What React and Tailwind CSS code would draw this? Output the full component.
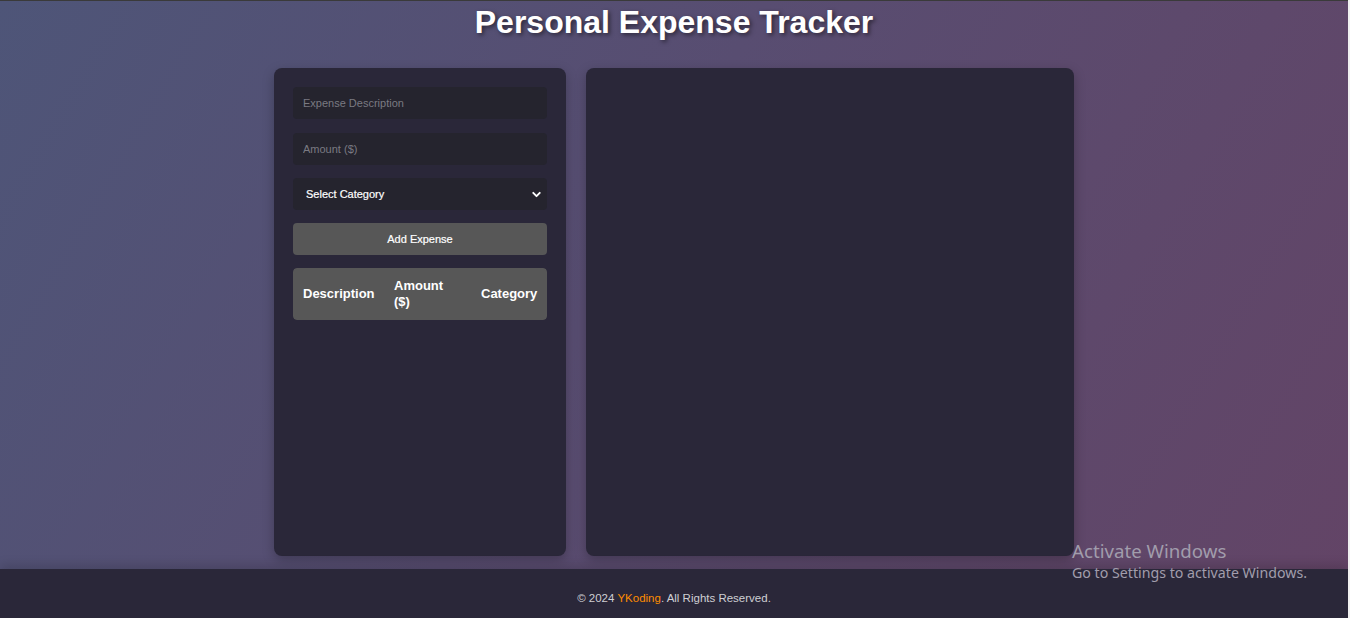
import { ChevronDown } from 'lucide-react';

export default function App() {
  return (
    <div className="relative flex h-[618px] w-[1350px] overflow-hidden font-['Liberation_Sans',Arial,sans-serif]">
      <div className="flex h-full w-[1348px] flex-col border-t border-[#3a3a3a] bg-[linear-gradient(120deg,#4e5578_0%,#584d71_45%,#634466_100%)]">
        {/* Title */}
        <h1 className="pt-[3px] text-center text-[32px] leading-[37px] font-bold text-white [text-shadow:2px_2px_4px_rgba(0,0,0,0.5)]">
          Personal Expense Tracker
        </h1>

        {/* Cards */}
        <main className="flex flex-1 justify-center gap-5 pt-[27px]">
          <section className="flex h-[488px] w-[292px] flex-col gap-[13px] rounded-lg bg-[#2a2739] p-[19px] shadow-[0_4px_12px_rgba(0,0,0,0.25)]">
            <input
              type="text"
              placeholder="Expense Description"
              className="mb-px h-8 w-full rounded bg-[#25242e] px-[10px] text-[11px] text-white outline-none placeholder:text-[#7a7a82]"
            />
            <input
              type="text"
              placeholder="Amount ($)"
              className="h-8 w-full rounded bg-[#25242e] px-[10px] text-[11px] text-white outline-none placeholder:text-[#7a7a82]"
            />
            <div className="relative">
              <select className="h-8 w-full appearance-none rounded bg-[#25242e] px-[13px] text-[11px] text-white outline-none [-webkit-text-stroke:0.2px_white]">
                <option>Select Category</option>
              </select>
              <ChevronDown size={13} strokeWidth={3.5} className="pointer-events-none absolute top-[10px] right-[4px] text-white" />
            </div>
            <button className="h-8 w-full rounded bg-[#575757] text-[11px] text-white [-webkit-text-stroke:0.2px_white]">
              Add Expense
            </button>
            <table className="w-full table-fixed overflow-hidden rounded">
              <thead>
                <tr className="bg-[#575757] text-white">
                  <th className="w-[91px] rounded-l px-[10px] py-[10px] text-left text-[13px] leading-[16px] font-bold">Description</th>
                  <th className="w-[87px] px-[10px] py-[10px] text-left text-[13px] leading-[16px] font-bold">Amount ($)</th>
                  <th className="w-[76px] rounded-r px-[10px] py-[10px] text-left text-[13px] leading-[16px] font-bold">Category</th>
                </tr>
              </thead>
            </table>
          </section>

          <section className="h-[488px] w-[488px] rounded-lg bg-[#2a2739] shadow-[0_4px_12px_rgba(0,0,0,0.25)]"></section>
        </main>

        {/* Footer */}
        <footer className="flex h-[49px] items-center justify-center bg-[#2a2739] pt-[11px] text-[11.5px] text-[#cfcfd4] shadow-[0_-4px_10px_rgba(0,0,0,0.15)]">
          <p>
            © 2024 <span className="text-[#ff8c00]">YKoding</span>. All Rights Reserved.
          </p>
        </footer>
      </div>
      <div className="h-full w-[2px] bg-[#f1f1f1]"></div>

      {/* Activate Windows watermark */}
      <div className="pointer-events-none absolute top-[539px] left-[1072px] font-['Noto_Sans','Open_Sans',sans-serif] text-[#a19dac]">
        <p className="text-[18.7px] leading-[24px]">Activate Windows</p>
        <p className="text-[14.2px] leading-[20px]">Go to Settings to activate Windows.</p>
      </div>
    </div>
  );
}
